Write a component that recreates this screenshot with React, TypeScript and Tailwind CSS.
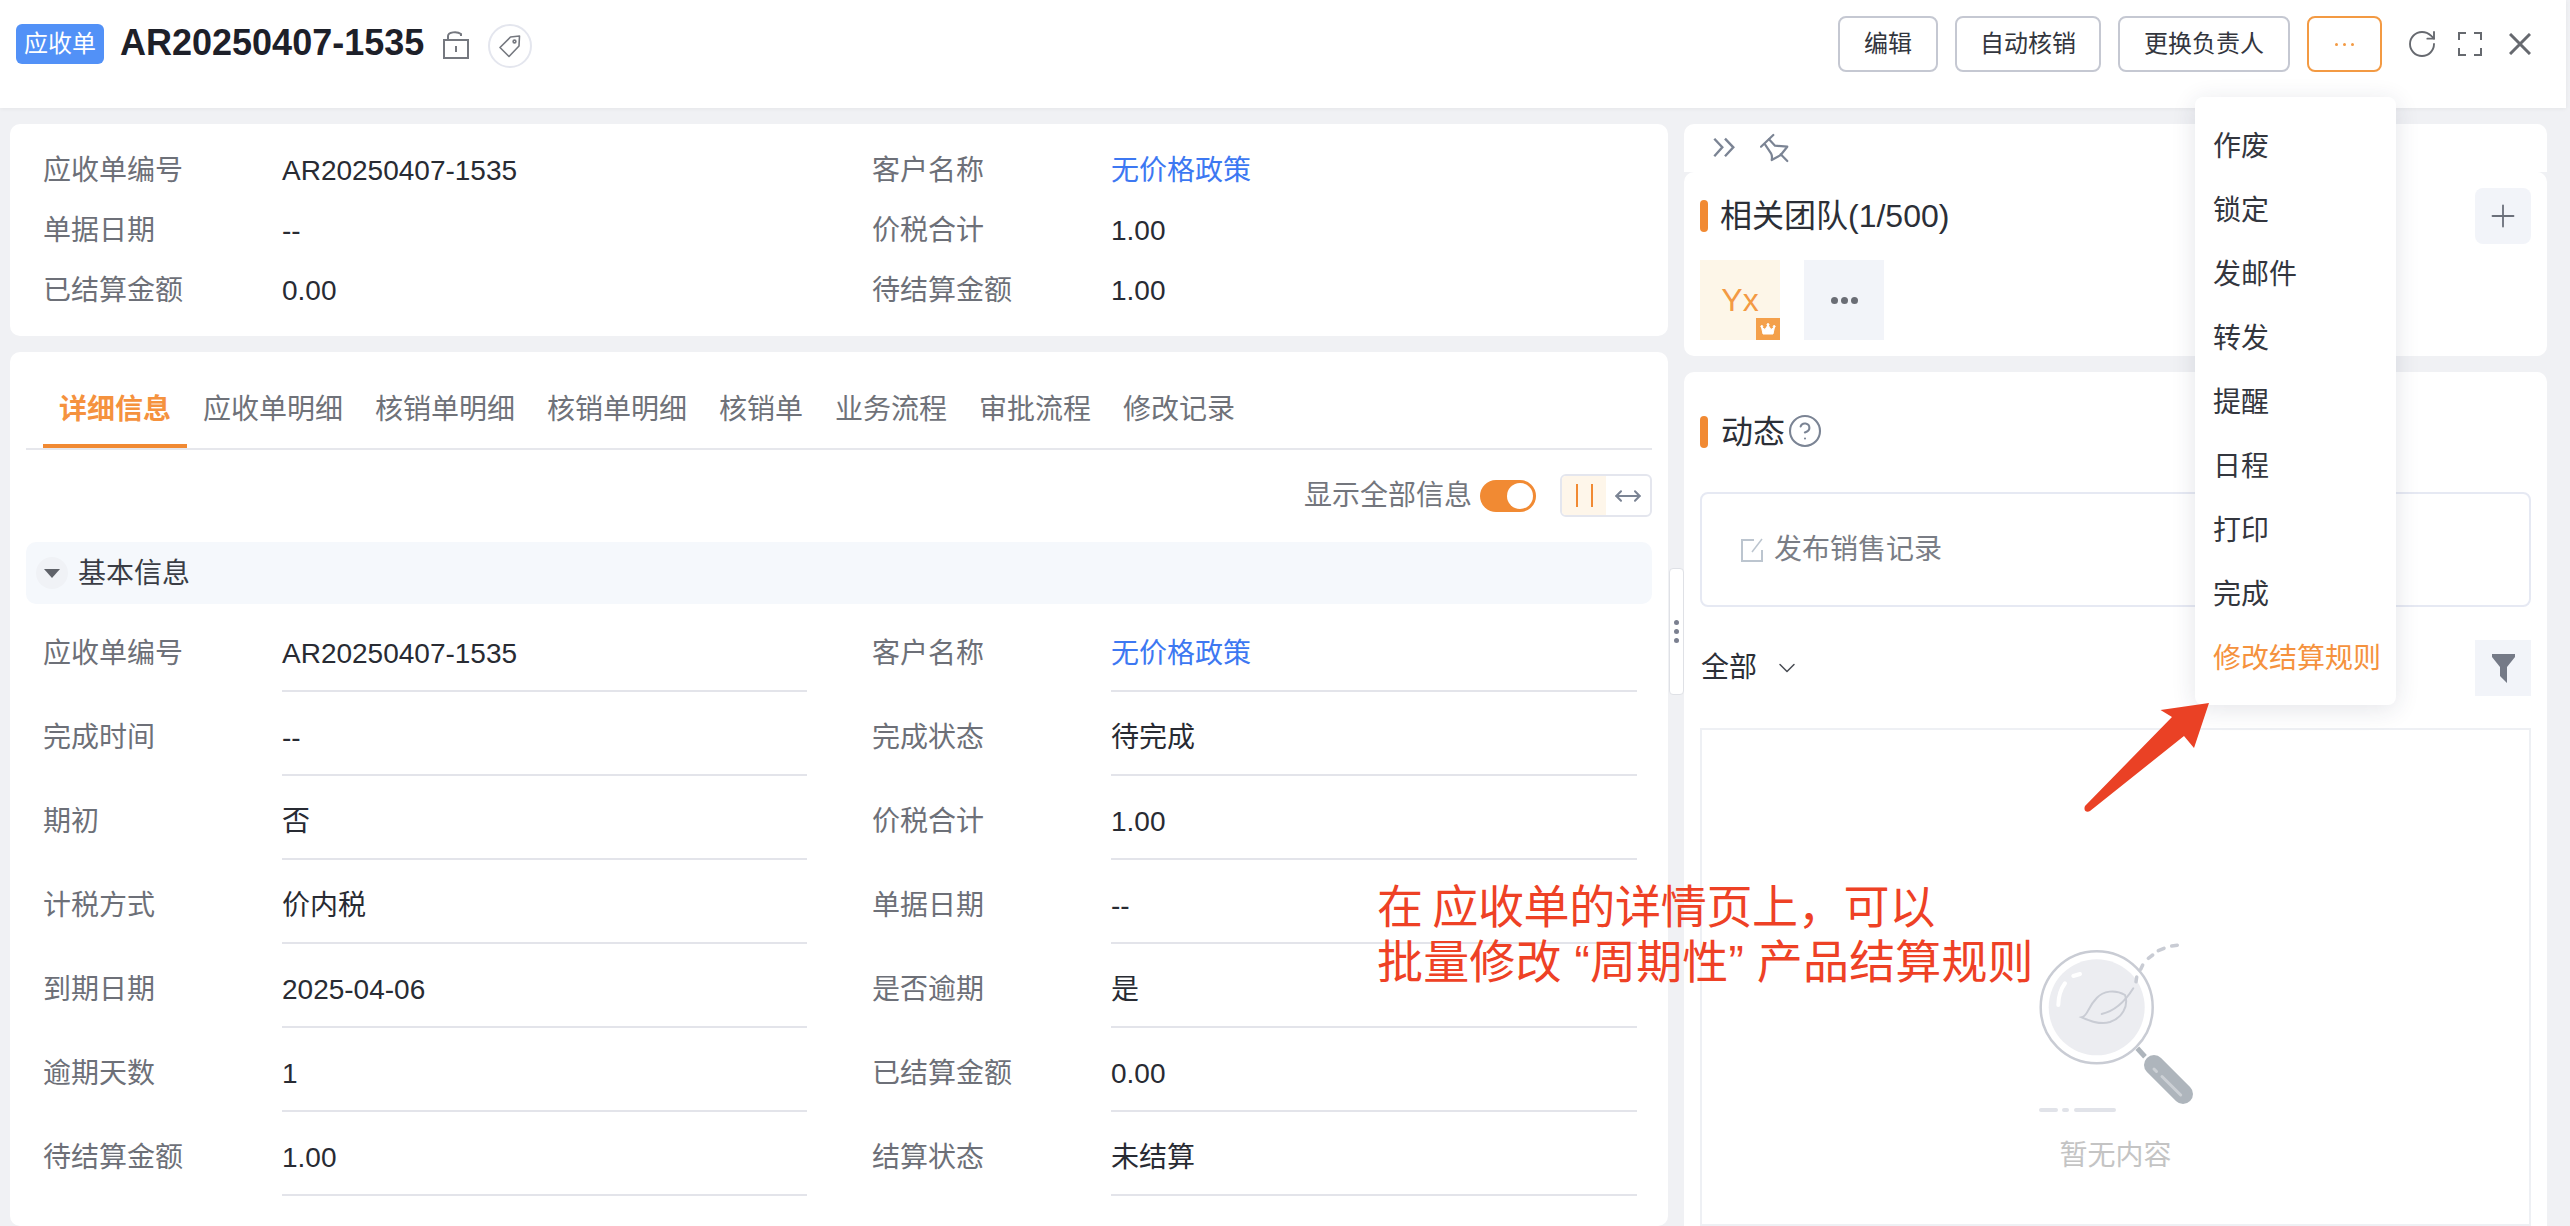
import { ChevronDown, CircleHelp, MoveHorizontal, Plus, RotateCw } from "lucide-react";

const summary = [
  ["应收单编号", "AR20250407-1535", "客户名称", "无价格政策"],
  ["单据日期", "--", "价税合计", "1.00"],
  ["已结算金额", "0.00", "待结算金额", "1.00"],
];
const details = [
  ["应收单编号", "AR20250407-1535", "客户名称", "无价格政策"],
  ["完成时间", "--", "完成状态", "待完成"],
  ["期初", "否", "价税合计", "1.00"],
  ["计税方式", "价内税", "单据日期", "--"],
  ["到期日期", "2025-04-06", "是否逾期", "是"],
  ["逾期天数", "1", "已结算金额", "0.00"],
  ["待结算金额", "1.00", "结算状态", "未结算"],
];
const tabs = [
  ["详细信息", true],
  ["应收单明细", false],
  ["核销单明细", false],
  ["核销单明细", false],
  ["核销单", false],
  ["业务流程", false],
  ["审批流程", false],
  ["修改记录", false],
] as const;
const menu = ["作废", "锁定", "发邮件", "转发", "提醒", "日程", "打印", "完成"];
const buttons = [
  ["编辑", "w-[100px]"],
  ["自动核销", "w-[146px]"],
  ["更换负责人", "w-[172px]"],
];

function Value({ text }: { text: string }) {
  return <span className={text === "无价格政策" ? "text-[#3d78f2]" : "text-[#282b33]"}>{text}</span>;
}

function Field({ label, value, line }: { label: string; value: string; line?: boolean }) {
  return (
    <div className="flex">
      <div className={line ? "w-[239px] pt-[26px] text-[#6d7078]" : "w-[239px] pt-3 text-[#6d7078]"}>{label}</div>
      <div className={line ? "flex-1 border-b-2 border-[#e3e4ea] pt-[26px] pb-4" : "flex-1 pt-3 pb-2"}>
        <Value text={value} />
      </div>
    </div>
  );
}

function Bar() {
  return <span className="block h-8 w-2 rounded-full bg-[#f18a33]" />;
}

function Empty() {
  return (
    <svg className="ml-[3px]" width="174" height="180" viewBox="0 0 174 180" fill="none" strokeLinecap="round">
      <circle cx="66.7" cy="67.3" r="56" stroke="#c9ccd4" strokeWidth="2.5" />
      <circle cx="66.7" cy="67.3" r="48" fill="#ecedf1" />
      <path d="M28.3 65 Q28.5 52 35 43.3" stroke="#fff" strokeWidth="4" />
      <path d="M43.3 36 L50 34" stroke="#fff" strokeWidth="4" />
      <path d="M51.7 77.3 C58 76 57 68 66.7 58 C73 51 85 49 95 55 C99 66 92 78 80 82 C70 85 60 81 51.7 77.3Z" stroke="#c9ccd4" strokeWidth="2" fill="#ecedf1" />
      <path d="M71.7 74 C85 71 96 60 103.3 48.3" stroke="#c9ccd4" strokeWidth="2" />
      <path d="M106.7 37 L106 41.7 M110.7 29.3 L112.7 25 M118.3 18.3 L122.7 15 M128.3 10.7 L134 8.3 M141.7 6 L147.3 5.3" stroke="#c9ccd4" strokeWidth="3.5" />
      <path d="M107.3 108.3 L115 116.7" stroke="#aeb5bc" strokeWidth="5" strokeLinecap="butt" />
      <path d="M124 125 L153 154" stroke="#aeb5bc" strokeWidth="20" />
      <path d="M124 129 L126.5 131.5 M132 136.5 L150.7 155" stroke="#ccd0d5" strokeWidth="3" />
      <path d="M11 170 H26 M34 170 H37 M46 170 H84" stroke="#e1e3e9" strokeWidth="4" />
    </svg>
  );
}

export default function App() {
  return (
    <div className="relative flex h-[1226px] w-[2570px] flex-col overflow-hidden bg-[#f0f1f4] font-['Liberation_Sans','Noto_Sans_CJK_SC',sans-serif] text-[28px] leading-[40px]">
      {/* header */}
      <header className="flex h-[108px] w-[2566px] shrink-0 items-start justify-between bg-white pr-[35px] pl-4 shadow-[0_1px_4px_rgba(0,0,0,0.05)]">
        <div className="flex items-center pt-[24px]">
          <span className="mt-[-4px] flex h-10 w-[88px] items-center justify-center rounded-md bg-[#5291f7] text-[24px] text-white">应收单</span>
          <h1 className="mt-[-6px] ml-4 text-[36px] leading-[44px] font-bold text-[#1d2029]">AR20250407-1535</h1>
          <svg className="mt-[-2px] ml-[19px]" width="26" height="28" viewBox="0 0 26 28" fill="none" stroke="#75787f" strokeWidth="2">
            <rect x="1" y="9" width="24" height="18" />
            <path d="M5 9 V5 C5 1 14 0 18 3 V5" />
            <path d="M13 15 V21" />
          </svg>
          <span className="ml-[19px] flex h-[44px] w-[44px] items-center justify-center rounded-full border-2 border-[#e4e6ee]">
            <svg width="24" height="24" viewBox="0 0 24 24" fill="none" stroke="#75787f" strokeWidth="1.6" strokeLinejoin="round">
              <path d="M21.5 2 L12.5 3 L2 13.5 L11 22.5 L21 12 Z" />
              <circle cx="16.5" cy="7.5" r="1.4" />
            </svg>
          </span>
        </div>
        <div className="flex items-center pt-4">
          <div className="flex gap-[17px]">
            {buttons.map(([b, w]) => (
              <button key={b} className={`${w} h-14 rounded-lg border-2 border-[#c5c8d2] bg-white text-[24px] leading-[32px] text-[#33363e]`}>
                {b}
              </button>
            ))}
            <button className="flex h-14 w-[75px] items-center justify-center gap-[5px] rounded-lg border-2 border-[#f39a43] bg-white">
              <span className="h-[3px] w-[3px] rounded-full bg-[#f39a43]" />
              <span className="h-[3px] w-[3px] rounded-full bg-[#f39a43]" />
              <span className="h-[3px] w-[3px] rounded-full bg-[#f39a43]" />
            </button>
          </div>
          <RotateCw className="ml-6" size={32} strokeWidth={1.4} color="#66696f" />
          <svg className="ml-5" width="24" height="24" viewBox="0 0 24 24" fill="none" stroke="#66696f" strokeWidth="2">
            <path d="M8 1 H1 V8 M16 1 H23 V8 M1 16 V23 H8 M23 16 V23 H16" />
          </svg>
          <svg className="ml-[27px]" width="22" height="22" viewBox="0 0 22 22" fill="none" stroke="#66696f" strokeWidth="3">
            <path d="M1 1 L21 21 M21 1 L1 21" />
          </svg>
        </div>
      </header>

      {/* body */}
      <main className="flex min-h-0 flex-1 pt-4 pl-[10px]">
        <div className="flex w-[1658px] flex-col gap-4">
          <section className="h-[212px] rounded-[10px] bg-white pt-[15px] pl-[33px]">
            <div className="grid grid-cols-[764px_765px] gap-x-[65px]">
              {summary.flatMap((r) => [
                <Field key={r[0]} label={r[0]} value={r[1]} />,
                <Field key={r[2]} label={r[2]} value={r[3]} />,
              ])}
            </div>
          </section>
          <section className="flex-1 rounded-[10px] bg-white px-4 pt-9">
            <div className="flex border-b-2 border-[#e6e7ec] pl-[17px]">
              {tabs.map(([t, active], i) => (
                <div
                  key={i}
                  className={active ? "border-b-4 border-[#f18a33] px-4 pt-[2px] pb-[14px] font-bold text-[#f5923e]" : "border-b-4 border-transparent px-4 pt-[2px] pb-[14px] text-[#6f7279]"}
                >
                  {t}
                </div>
              ))}
            </div>
            <div className="mt-6 flex h-[43px] items-center justify-end">
              <span className="text-[#73767d]">显示全部信息</span>
              <span className="ml-2 flex h-8 w-14 items-center justify-end rounded-full bg-[#f18a33] pr-[3px]">
                <span className="h-[26px] w-[26px] rounded-full bg-white" />
              </span>
              <div className="ml-6 flex h-[43px] w-[92px] overflow-hidden rounded-md border-2 border-[#e4e6ee]">
                <div className="flex w-[44px] justify-center gap-[13px] bg-[#fef6ea] pt-2">
                  <span className="h-[23px] w-[2px] bg-[#f18a33]" />
                  <span className="h-[23px] w-[2px] bg-[#f18a33]" />
                </div>
                <div className="flex flex-1 items-center justify-center">
                  <MoveHorizontal size={28} strokeWidth={1.8} color="#7b8494" />
                </div>
              </div>
            </div>
            <div className="mt-[25px] flex h-[62px] items-center rounded-[10px] bg-[#f5f8fc] pl-[10px]">
              <span className="flex h-8 w-8 items-center justify-center rounded-full bg-[#f0f2f6]">
                <svg width="16" height="9" viewBox="0 0 16 9">
                  <path d="M0 0 H16 L8 9 Z" fill="#5f6269" />
                </svg>
              </span>
              <span className="ml-[10px] pt-[2px] text-[#3a3d45]">基本信息</span>
            </div>
            <div className="mt-1 grid grid-cols-[764px_765px] gap-x-[65px] pl-[17px]">
              {details.flatMap((r, i) => [
                <Field key={i + "l"} label={r[0]} value={r[1]} line />,
                <Field key={i + "r"} label={r[2]} value={r[3]} line />,
              ])}
            </div>
          </section>
        </div>

        {/* splitter */}
        <div className="flex w-4 flex-col items-center pt-[444px]">
          <div className="flex h-[127px] w-[15px] flex-col items-center justify-center gap-[4px] rounded border border-[#dfe1e6] bg-white">
            <span className="h-[5px] w-[5px] rounded-full bg-[#7b8090]" />
            <span className="h-[5px] w-[5px] rounded-full bg-[#7b8090]" />
            <span className="h-[5px] w-[5px] rounded-full bg-[#7b8090]" />
          </div>
        </div>

        {/* right column */}
        <div className="flex w-[863px] flex-col">
          <div className="flex h-12 items-center rounded-t-[10px] bg-white pl-7">
            <svg width="24" height="24" viewBox="0 0 24 24" fill="none" stroke="#7b8494" strokeWidth="2.4">
              <path d="M2.3 2.7 L10.3 11.3 L2.3 20.3 M13 2.7 L21.3 11.3 L13 20.3" />
            </svg>
            <svg className="ml-6" width="30" height="30" viewBox="0 0 30 30" fill="none" stroke="#7b8494" strokeWidth="2.2" strokeLinejoin="round" strokeLinecap="round">
              <path d="M1 13.7 L13.3 2" />
              <path d="M9 6.3 L15 12.7 L27.3 13.7 L20.7 22 L11.7 27 Q12.5 23 11 20.3 L5 11.3" />
              <path d="M20.7 21.3 L27.3 28" />
            </svg>
          </div>
          <section className="h-[184px] rounded-[10px] bg-white px-4">
            <div className="flex h-14 translate-y-4 items-center justify-between">
              <div className="flex items-center gap-3">
                <Bar />
                <span className="text-[32px] leading-[44px] text-[#2c2f37]">相关团队(1/500)</span>
              </div>
              <span className="flex h-14 w-14 items-center justify-center rounded-lg bg-[#f2f4f9]">
                <Plus size={36} strokeWidth={1.2} color="#6a6f7a" />
              </span>
            </div>
            <div className="mt-8 flex gap-6">
              <div className="relative flex h-20 w-20 items-center justify-center bg-[#fdf6e8] text-[32px] text-[#f39a43]">
                Yx
                <span className="absolute right-0 bottom-0 flex h-[22px] w-[24px] items-center justify-center bg-[#f4a04a]">
                  <svg width="16" height="12" viewBox="0 0 16 12" fill="#fff" stroke="#fff" strokeWidth="1" strokeLinejoin="round">
                    <path d="M1.5 4 L5 6.5 L8 2 L11 6.5 L14.5 4 L13 11 H3 Z" />
                    <circle cx="1.8" cy="3.5" r="1" />
                    <circle cx="8" cy="1.6" r="1" />
                    <circle cx="14.2" cy="3.5" r="1" />
                  </svg>
                </span>
              </div>
              <div className="flex h-20 w-20 items-center justify-center gap-[3px] bg-[#f2f4f9]">
                <span className="h-[7px] w-[7px] rounded-full bg-[#6a6d75]" />
                <span className="h-[7px] w-[7px] rounded-full bg-[#6a6d75]" />
                <span className="h-[7px] w-[7px] rounded-full bg-[#6a6d75]" />
              </div>
            </div>
          </section>
          <section className="mt-4 flex flex-1 flex-col rounded-t-[10px] bg-white px-4 pt-11">
            <div className="flex h-8 items-center">
              <Bar />
              <span className="ml-[13px] text-[32px] leading-[44px] text-[#2c2f37]">动态</span>
              <CircleHelp className="mt-[-2px] ml-[2px]" size={36} strokeWidth={1.4} color="#7b8494" />
            </div>
            <div className="mt-11 flex h-[115px] items-center rounded-lg border-2 border-[#e6e9f3] pl-[38px]">
              <svg width="24" height="24" viewBox="0 0 24 24" fill="none" stroke="#bcc5cf" strokeWidth="2">
                <path d="M14 2 H2 V23 H22 V12" />
                <path d="M12 14 L22 1" strokeWidth="1.5" />
              </svg>
              <span className="ml-[10px] text-[#7a7d85]">发布销售记录</span>
            </div>
            <div className="mt-[33px] flex h-14 items-center justify-between">
              <div className="flex items-center pl-px text-[#2c2f37]">
                全部
                <ChevronDown className="ml-[16px]" size={28} strokeWidth={1.3} color="#4a4d55" />
              </div>
              <span className="flex h-14 w-14 items-center justify-center bg-[#f2f4f9]">
                <svg width="23" height="29" viewBox="0 0 23 29" fill="#757a87">
                  <path d="M0 0 H23 V3 L15 13 V29 L8 22 V13 L0 3 Z" />
                </svg>
              </span>
            </div>
            <div className="mt-8 flex flex-1 flex-col items-center border-2 border-[#eef0f4] pt-[210px]">
              <Empty />
              <div className="mt-4 text-[#c4c4c4]">暂无内容</div>
            </div>
          </section>
        </div>
      </main>

      {/* open dropdown */}
      <div className="absolute top-[97px] left-[2195px] w-[201px] rounded-lg bg-white pt-[18px] pb-[14px] shadow-[0_4px_24px_rgba(30,40,70,0.12)]">
        {menu.map((m) => (
          <div key={m} className="flex h-16 items-center pl-[18px] text-[#33363e]">
            {m}
          </div>
        ))}
        <div className="flex h-16 items-center pl-[18px] text-[#f5923e]">修改结算规则</div>
      </div>

      {/* annotation */}
      <div className="absolute top-[880px] left-[1377px] text-[46px] leading-[55px] text-[#ee4125]">
        <div className="tracking-[-0.3px] [word-spacing:-3px]">在 应收单的详情页上，可以</div>
        <div className="tracking-[0.15px]">批量修改 “周期性” 产品结算规则</div>
      </div>
      <svg className="absolute top-[699px] left-[2081px]" width="132" height="116" viewBox="0 0 132 116">
        <path d="M128 4 L79.5 11 L91 18 L4 107 C2 112 6 114 9 112 L103 37 L113 49 Z" fill="#ea4125" />
      </svg>
    </div>
  );
}
